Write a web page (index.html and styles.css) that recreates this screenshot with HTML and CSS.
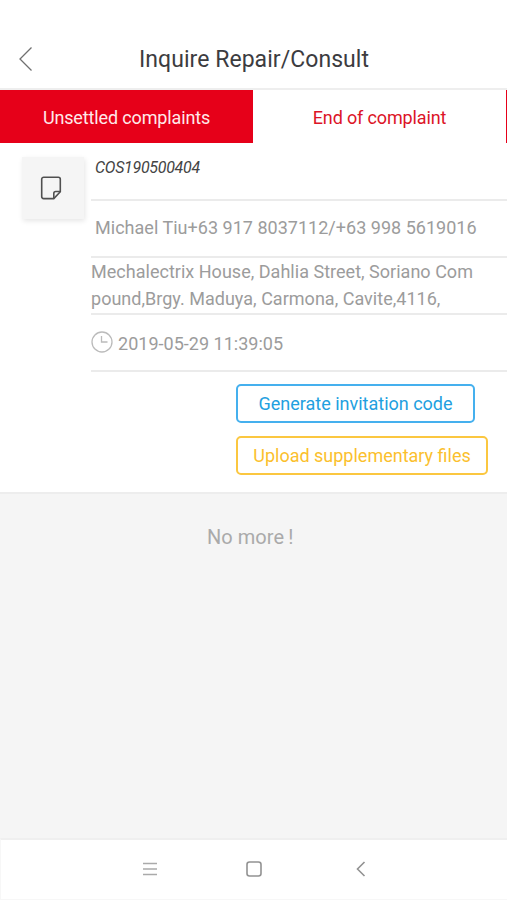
FILE: index.html
```html
<!DOCTYPE html>
<html lang="en">
<head>
<meta charset="utf-8">
<title>Inquire Repair/Consult</title>
<link rel="stylesheet" href="styles.css">
</head>
<body>
<div class="app">
  <header class="header">
    <svg class="back" width="16" height="26" viewBox="0 0 16 26"><path d="M13.500 1.500 2 13l11.500 11.500"/></svg>
    <h1 class="title">Inquire Repair/Consult</h1>
  </header>
  <nav class="tabs">
    <a class="tab tab-filled"><span class="tab-text">Unsettled complaints</span></a>
    <a class="tab"><span class="tab-text">End of complaint</span></a>
  </nav>
  <main class="ticket">
    <div class="thumb">
      <svg width="22" height="24" viewBox="0 0 22 24"><path d="M3.700 1.200h14.600a2 2 0 0 1 2 2v12.600l-6.500 6.800H3.700a2 2 0 0 1-2-2V3.200a2 2 0 0 1 2-2z"/><path d="M13.800 22.300v-4.800a2 2 0 0 1 2-2h4.300"/></svg>
    </div>
    <div class="details">
      <div class="row code">COS190500404</div>
      <div class="row contact">Michael Tiu+63 917 8037112/+63 998 5619016</div>
      <div class="row address">Mechalectrix House, Dahlia Street, Soriano Com<br>pound,Brgy. Maduya, Carmona, Cavite,4116,</div>
      <div class="row time">
        <svg width="22" height="22" viewBox="0 0 22 22"><circle cx="11" cy="11" r="10"/><path d="M10.500 5v6h6"/></svg>
        <span>2019-05-29 11:39:05</span>
      </div>
      <div class="actions">
        <button class="btn btn-blue">Generate invitation code</button>
        <button class="btn btn-yellow">Upload supplementary files</button>
      </div>
    </div>
  </main>
  <section class="empty">No more<span class="bang">!</span></section>
  <footer class="navbar">
    <svg class="nav-menu" width="16" height="16" viewBox="0 0 16 16"><path d="M1 2.500h14M1 8h14M1 13.500h14"/></svg>
    <svg class="nav-home" width="18" height="18" viewBox="0 0 18 18"><rect x="2" y="2" width="14" height="14" rx="2.500"/></svg>
    <svg class="nav-back" width="10" height="16" viewBox="0 0 10 16"><path d="M8.500 1 1.500 8l7 7"/></svg>
  </footer>
</div>
</body>
</html>
```

FILE: styles.css
```css
* { box-sizing: border-box; }
body { margin: 0; font-family: Roboto, "Liberation Sans", sans-serif; background: #fff; }
svg { display: block; flex: none; fill: none; }
.app { width: 507px; height: 900px; display: flex; flex-direction: column; overflow: hidden; }

.header { height: 90px; padding: 30px 0 0 18px; display: flex; align-items: center; border-bottom: 2px solid #eee; }
.back { stroke: #707070; stroke-width: 1.3; }
.title { margin: 2px 0 0 105px; font-size: 23px; font-weight: 400; line-height: 30px; letter-spacing: .05px; color: #3c3c3f; white-space: nowrap; }

.tabs { height: 53px; display: flex; border-right: 1px solid #e60019; }
.tab { flex: 1; display: flex; align-items: center; justify-content: center; padding-top: 2px; font-size: 18px; letter-spacing: -.14px; color: #dc1427; }
.tab-filled { background: #e60019; color: #ffe9e9; }

.ticket { height: 349px; display: flex; padding-left: 22px; }
.thumb { width: 62px; height: 62px; margin: 14px 7px 0 0; flex: none; display: flex; align-items: center; justify-content: center; background: #f5f5f5; box-shadow: 1px 2px 5px rgba(0, 0, 0, .1); }
.thumb svg { stroke: #505050; stroke-width: 1.6; margin-right: 4px; }
.details { flex: 1; min-width: 0; color: #9c9c9c; font-size: 18px; letter-spacing: .02px; white-space: nowrap; }
.row { border-bottom: 2px solid #ebebeb; }
.code { height: 58px; padding: 15px 0 0 4px; font-size: 16px; line-height: 20px; letter-spacing: -.3px; font-style: italic; color: #444; }
.contact { height: 57px; padding: 15px 0 0 4px; line-height: 24px; }
.address { height: 57px; line-height: 27px; }
.time { height: 57px; display: flex; align-items: center; gap: 5px; }
.time svg { margin-bottom: 2px; stroke: #bbb; stroke-width: 1.3; }
.time span { padding-top: 1px; }
.actions { display: flex; flex-direction: column; align-items: flex-start; gap: 13px; padding: 12px 0 0 145px; }
.btn { height: 39px; padding: 0; background: #fff; border: 2px solid; border-radius: 5px; font: 18px Roboto, "Liberation Sans", sans-serif; white-space: nowrap; }
.btn-blue { width: 239px; color: #22a0e0; border-color: #45b0ee; }
.btn-yellow { width: 252px; color: #fbbf2d; border-color: #fbc740; }

.empty { flex: 1; padding: 31px 0 0 207px; background: #f5f5f5; border-top: 2px solid #ededed; font-size: 20px; line-height: 24px; letter-spacing: .05px; color: #aaa; }
.bang { margin-left: 4px; }

.navbar { height: 62px; display: flex; align-items: center; padding: 0 0 2px 141px; border: 1px solid #f7f7f7; border-top: 2px solid #efefef; border-right: 0; }
.nav-menu { stroke: #aaa; stroke-width: 1.6; }
.nav-home { margin-left: 87px; stroke: #929292; stroke-width: 1.6; }
.nav-back { margin-left: 93px; stroke: #929292; stroke-width: 1.6; }
```
